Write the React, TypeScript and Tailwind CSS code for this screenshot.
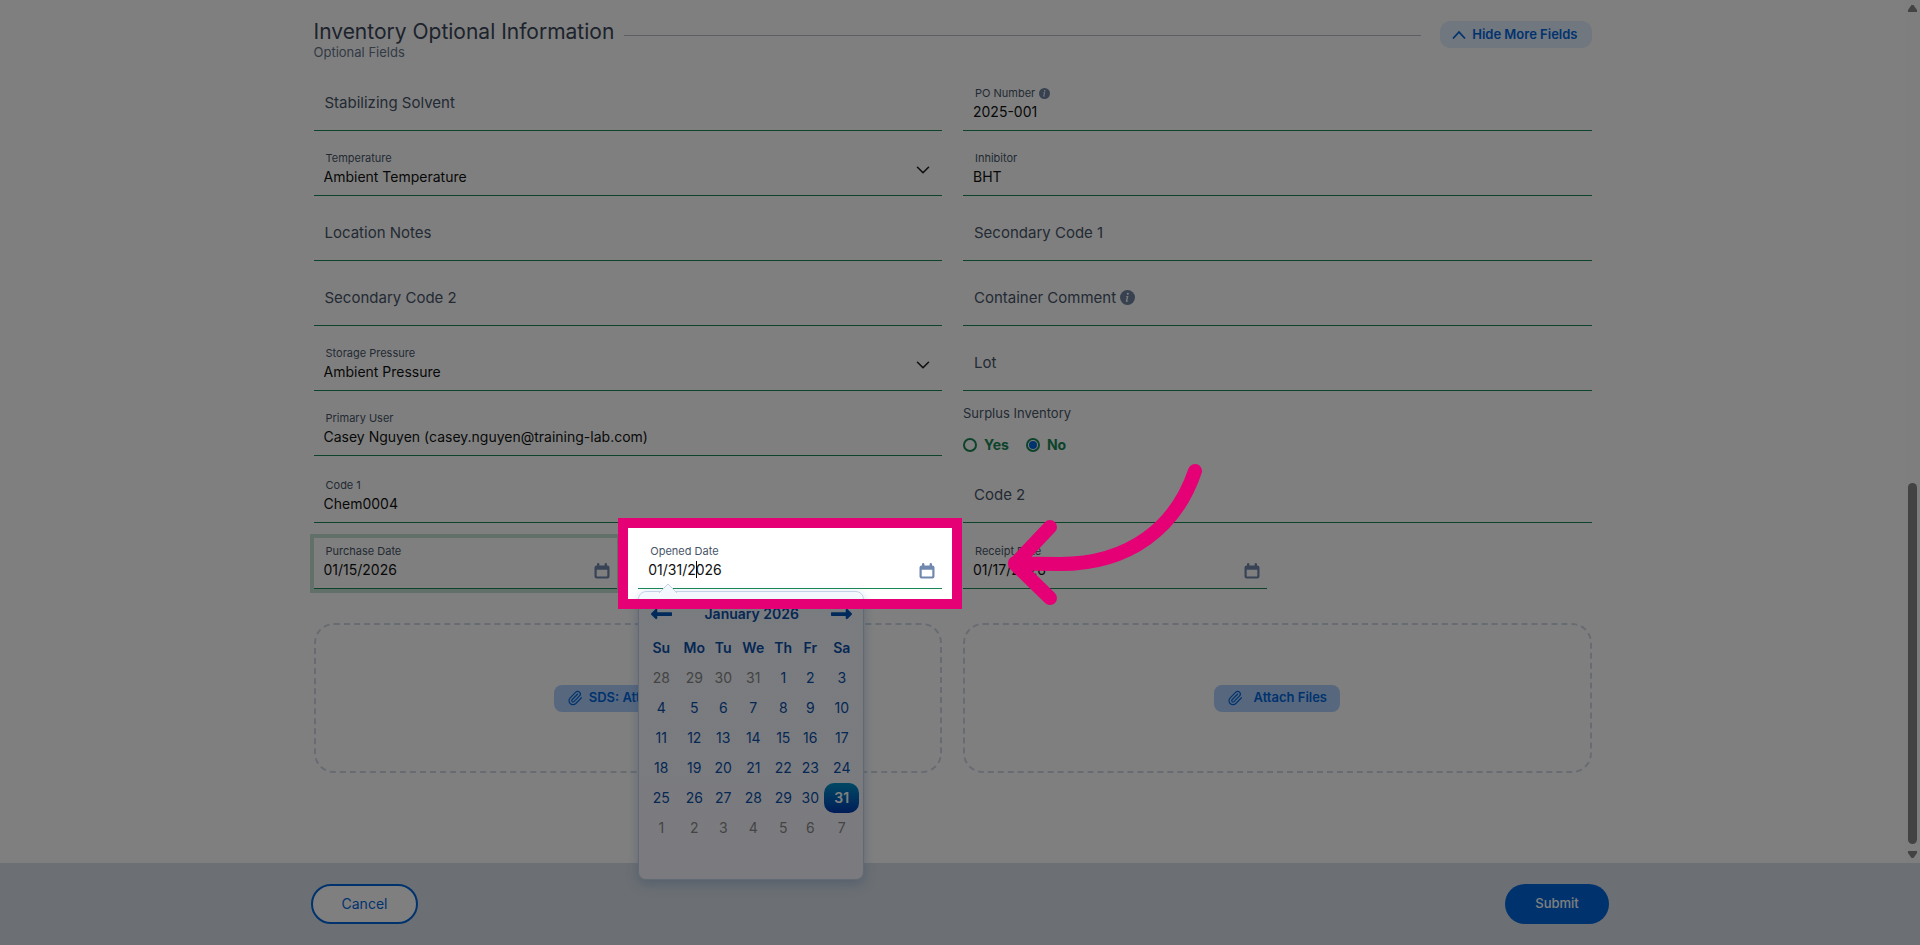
import React, { useState } from "react";
import { ChevronDown, Paperclip } from "lucide-react";
import { FaLongArrowAltLeft, FaLongArrowAltRight } from "react-icons/fa";

const LABEL = "pl-3 text-[11px] leading-[14px] text-[#475569]";
const VALUE = "h-5 w-full bg-transparent px-[10px] text-sm leading-5 text-[#111111] outline-none";
const FIELD = "relative h-[51px] border-b border-[#198754]";

function InfoIcon({ className }: { className: string }) {
  return (
    <svg viewBox="0 0 16 16" className={className} aria-hidden="true">
      <circle cx="8" cy="8" r="8" fill="#70839f" />
      <path d="M9.1 3.2a1.1 1.1 0 1 1-1.6 1.5 1.1 1.1 0 0 1 1.6-1.5zM6.3 6.7l2.700-.4-1.300 5c-.1.5.3.5.9 0l.2.3c-1.200 1.300-2.900 1.400-2.500-.2l.9-3.600c.1-.4-.1-.5-.9-.6z" fill="#fff" />
    </svg>
  );
}

function CalendarIcon() {
  return (
    <svg viewBox="0 0 16 16" className="size-4" aria-hidden="true">
      <path
        fill="#7088ad"
        fillRule="evenodd"
        d="M3 1.300a1.200 1.200 0 0 1 2.400 0V2.500h5.200V1.300a1.200 1.200 0 0 1 2.400 0V2.500h.4A2.100 2.100 0 0 1 15.500 4.600V13.400A2.100 2.100 0 0 1 13.400 15.500H2.600A2.100 2.100 0 0 1 .5 13.400V4.600A2.100 2.100 0 0 1 2.600 2.500H3zM2.700 6.800V12.900a.5.5 0 0 0 .5.5H12.800a.5.5 0 0 0 .5-.5V6.800z"
      />
    </svg>
  );
}

function EmptyField({ id, label, info }: { id: string; label: string; info?: boolean }) {
  return (
    <div className={`${FIELD} grid items-center`}>
      <label htmlFor={id} className="pointer-events-none col-start-1 row-start-1 flex items-center gap-1 pb-[5px] pl-[11px] text-[15px] leading-5 text-[#475569]">
        {label}
        {info && <InfoIcon className="size-[15px]" />}
      </label>
      <input id={id} className="col-start-1 row-start-1 h-full w-full bg-transparent px-[10px] text-sm outline-none" />
    </div>
  );
}

function TextField({ id, label, value, info }: { id: string; label: string; value: string; info?: boolean }) {
  return (
    <div className={`${FIELD} flex flex-col pt-[6px]`}>
      <label htmlFor={id} className={`${LABEL} flex items-center gap-1`}>
        {label}
        {info && <InfoIcon className="size-[11px]" />}
      </label>
      <input id={id} defaultValue={value} className={`${VALUE} mt-[2px]`} />
    </div>
  );
}

function SelectField({ id, label, value }: { id: string; label: string; value: string }) {
  return (
    <div className={`${FIELD} flex flex-col pt-[6px]`}>
      <label htmlFor={id} className={LABEL}>{label}</label>
      <select id={id} className={`${VALUE} mt-[2px] appearance-none`}>
        <option>{value}</option>
      </select>
      <ChevronDown className="pointer-events-none absolute right-2 top-[14px] size-[22px] text-[#222222]" strokeWidth={1.75} />
    </div>
  );
}

function DateField({ id, label, value, ring, children }: { id: string; label: string; value: string; ring?: boolean; children?: React.ReactNode }) {
  return (
    <div className={`${FIELD} flex items-end ${ring ? "shadow-[0_0_0_4px_rgba(25,135,84,0.25)]" : ""}`}>
      <div className="flex h-full min-w-0 flex-1 flex-col pt-[6px]">
        <label htmlFor={id} className={LABEL}>{label}</label>
        <input id={id} defaultValue={value} className={`${VALUE} mt-[2px]`} />
      </div>
      <button type="button" aria-label={`Choose ${label}`} className="mr-[7px] pb-[9px]">
        <CalendarIcon />
      </button>
      {children}
    </div>
  );
}

const WEEKDAYS = ["Su", "Mo", "Tu", "We", "Th", "Fr", "Sa"];
const COLS = ["w-[34px]", "w-[32px]", "w-[26px]", "w-[34px]", "w-[26px]", "w-[28px]", "w-[35px]"];
const WEEKS = [
  [28, 29, 30, 31, 1, 2, 3],
  [4, 5, 6, 7, 8, 9, 10],
  [11, 12, 13, 14, 15, 16, 17],
  [18, 19, 20, 21, 22, 23, 24],
  [25, 26, 27, 28, 29, 30, 31],
  [1, 2, 3, 4, 5, 6, 7],
];

function dayClass(week: number, day: number) {
  if ((week === 0 && day > 7) || week === 5) return "text-[#888888]";
  if (week === 4 && day === 31) return "rounded-[10px] bg-linear-to-b from-[#0090c8] to-[#0038b0] font-semibold text-white";
  return "text-[#0a4fa8]";
}

function DatePicker() {
  return (
    <div className="absolute left-0 top-[53px] z-20 h-[289px] w-[226px] rounded-lg border border-[#c3d3e6] bg-linear-to-b from-[#f3f8ff] to-[#f7f7ff] pl-[5px] shadow-[0_4px_12px_rgba(80,130,190,0.35)]">
      <svg viewBox="0 0 20 10" className="absolute -top-[9px] left-[19px] h-[10px] w-5" aria-hidden="true">
        <path d="M1 10 10 1l9 9" fill="#f3f8ff" stroke="#c3d3e6" />
      </svg>
      <div className="flex h-[41px] items-center justify-between pl-[7px] pr-[11px] pt-[3px]">
        <button type="button" aria-label="Previous month">
          <FaLongArrowAltLeft className="h-6 w-[21px] text-[#0055b8]" />
        </button>
        <span className="text-sm font-semibold text-[#0a4fa8]">January 2026</span>
        <button type="button" aria-label="Next month">
          <FaLongArrowAltRight className="h-6 w-[21px] text-[#0055b8]" />
        </button>
      </div>
      <table className="table-fixed border-collapse text-center text-sm">
        <thead>
          <tr className="h-[30px]">
            {WEEKDAYS.map((d, i) => (
              <th key={d} className={`${COLS[i]} p-0 font-semibold text-[#0a4fa8]`}>{d}</th>
            ))}
          </tr>
        </thead>
        <tbody>
          {WEEKS.map((week, w) => (
            <tr key={w} className="h-[30px]">
              {week.map((day) => (
                <td key={day} className="p-0">
                  <button type="button" className={`h-[30px] w-full ${dayClass(w, day)}`}>{day}</button>
                </td>
              ))}
            </tr>
          ))}
        </tbody>
      </table>
    </div>
  );
}

function Spotlight() {
  return (
    <>
      <div className="pointer-events-none absolute -bottom-[21px] -left-5 -right-5 -top-5 z-30 border-[10px] border-[#e60076] shadow-[0_0_0_9999px_rgba(0,0,0,0.5)]" />
      <svg viewBox="1000 454 210 160" className="pointer-events-none absolute -top-[84px] left-[362px] z-40 h-[160px] w-[210px]" aria-hidden="true">
        <path
          d="M1195 471C1176 527 1130 564 1060 564Q1038 564 1015 563M1050 527 1015 564 1050 598"
          fill="none"
          stroke="#e60076"
          strokeWidth="14"
          strokeLinecap="round"
          strokeLinejoin="round"
        />
      </svg>
    </>
  );
}

function Radio({ label, checked, onChange }: { label: string; checked: boolean; onChange: () => void }) {
  return (
    <label className="flex items-center gap-[7px] text-sm font-bold leading-5 text-[#198754]">
      <span className="grid size-[14px] place-items-center">
        <input
          type="radio"
          name="surplus"
          checked={checked}
          onChange={onChange}
          className="col-start-1 row-start-1 size-[14px] appearance-none rounded-full border-2 border-[#198754]"
        />
        {checked && <span className="col-start-1 row-start-1 size-2 rounded-full bg-[#0066dd]" />}
      </span>
      {label}
    </label>
  );
}

function UploadBox({ label, gap }: { label: string; gap: string }) {
  return (
    <div className="flex h-[150px] items-center justify-center rounded-[20px] border-2 border-dashed border-[#d0d7e2]">
      <button type="button" className={`flex h-[27px] items-center rounded-lg bg-[#aed0fc] px-[13px] text-[13px] font-semibold text-[#0066dd] ${gap}`}>
        <Paperclip className="size-4" strokeWidth={1.75} />
        {label}
      </button>
    </div>
  );
}

export default function App() {
  const [surplus, setSurplus] = useState(false);
  return (
    <div className="flex min-h-screen flex-col overflow-hidden bg-white font-['Inter',sans-serif]">
      <div className="flex flex-1">
        <main className="min-w-0 flex-1 px-6 pb-[90px] pt-5">
          <div className="mx-auto max-w-[1278px]">
            <header className="flex items-start">
              <div>
                <h2 className="text-[21px] leading-6 text-[#3a4658]">Inventory Optional Information</h2>
                <p className="text-[13px] leading-4 text-[#66758c]">Optional Fields</p>
              </div>
              <div className="ml-[10px] mr-[19px] mt-[15px] h-px flex-1 bg-[#b8bcc8]" />
              <button type="button" className="mt-px flex h-[27px] items-center gap-[6px] rounded-[10px] bg-[#e0eeff] pl-3 pr-[14px] text-[13px] font-semibold text-[#0066dd]">
                <svg viewBox="0 0 14 10" className="h-[10px] w-[14px]" aria-hidden="true">
                  <path d="M1 8.500 7 2l6 6.500" fill="none" stroke="currentColor" strokeWidth="1.800" />
                </svg>
                Hide More Fields
              </button>
            </header>

            <form className="mt-5">
              <div className="grid grid-cols-2 gap-x-[21px] gap-y-[14px]">
                <EmptyField id="solvent" label="Stabilizing Solvent" />
                <TextField id="po" label="PO Number" value="2025-001" info />
                <SelectField id="temperature" label="Temperature" value="Ambient Temperature" />
                <TextField id="inhibitor" label="Inhibitor" value="BHT" />
                <EmptyField id="location" label="Location Notes" />
                <EmptyField id="secondary1" label="Secondary Code 1" />
                <EmptyField id="secondary2" label="Secondary Code 2" />
                <EmptyField id="comment" label="Container Comment" info />
                <SelectField id="pressure" label="Storage Pressure" value="Ambient Pressure" />
                <EmptyField id="lot" label="Lot" />
                <TextField id="user" label="Primary User" value="Casey Nguyen (casey.nguyen@training-lab.com)" />
                <fieldset className="min-w-0">
                  <legend className="text-[13px] leading-4 text-[#475569]">Surplus Inventory</legend>
                  <div className="mt-[14px] flex gap-[17px]">
                    <Radio label="Yes" checked={surplus} onChange={() => setSurplus(true)} />
                    <Radio label="No" checked={!surplus} onChange={() => setSurplus(false)} />
                  </div>
                </fieldset>
              </div>
              <div className="mt-4 grid grid-cols-2 gap-x-[21px]">
                <TextField id="code1" label="Code 1" value="Chem0004" />
                <EmptyField id="code2" label="Code 2" />
              </div>
              <div className="mt-[15px] grid grid-cols-4 gap-x-[21px]">
                <DateField id="purchase" label="Purchase Date" value="01/15/2026" ring />
                <DateField id="opened" label="Opened Date" value="01/31/2026">
                  <span className="absolute left-[58px] top-[23px] h-[17px] w-px bg-black" />
                  <DatePicker />
                  <Spotlight />
                </DateField>
                <DateField id="receipt" label="Receipt Date" value="01/17/2026" />
              </div>
              <div className="mt-[34px] grid grid-cols-2 gap-x-[21px]">
                <UploadBox label="SDS: Attach File" gap="gap-[6px]" />
                <UploadBox label="Attach Files" gap="gap-[10px]" />
              </div>
            </form>
          </div>
        </main>
        <div className="flex w-[15px] flex-col items-center bg-[#fcfcfc] py-1" aria-hidden="true">
          <svg viewBox="0 0 9 8" className="h-2 w-[9px]"><path d="M3.500 1h2L9 6v2H0V6z" fill="#868686" /></svg>
          <div className="grow-[472]" />
          <div className="w-[9px] grow-[361] rounded-full bg-[#868686]" />
          <svg viewBox="0 0 9 8" className="mt-[7px] h-2 w-[9px]"><path d="M0 0h9v2L5.500 7h-2L0 2z" fill="#868686" /></svg>
        </div>
      </div>
      <footer className="bg-[#d8dfe8] px-6 py-[21px]">
        <div className="mx-auto flex max-w-[1298px] justify-between">
          <button type="button" className="h-10 w-[107px] rounded-full border-2 border-[#0066dd] bg-white text-sm text-[#0066dd]">Cancel</button>
          <button type="button" className="h-10 w-[104px] rounded-full bg-[#0066dd] text-[13px] font-medium text-white">Submit</button>
        </div>
      </footer>
    </div>
  );
}
